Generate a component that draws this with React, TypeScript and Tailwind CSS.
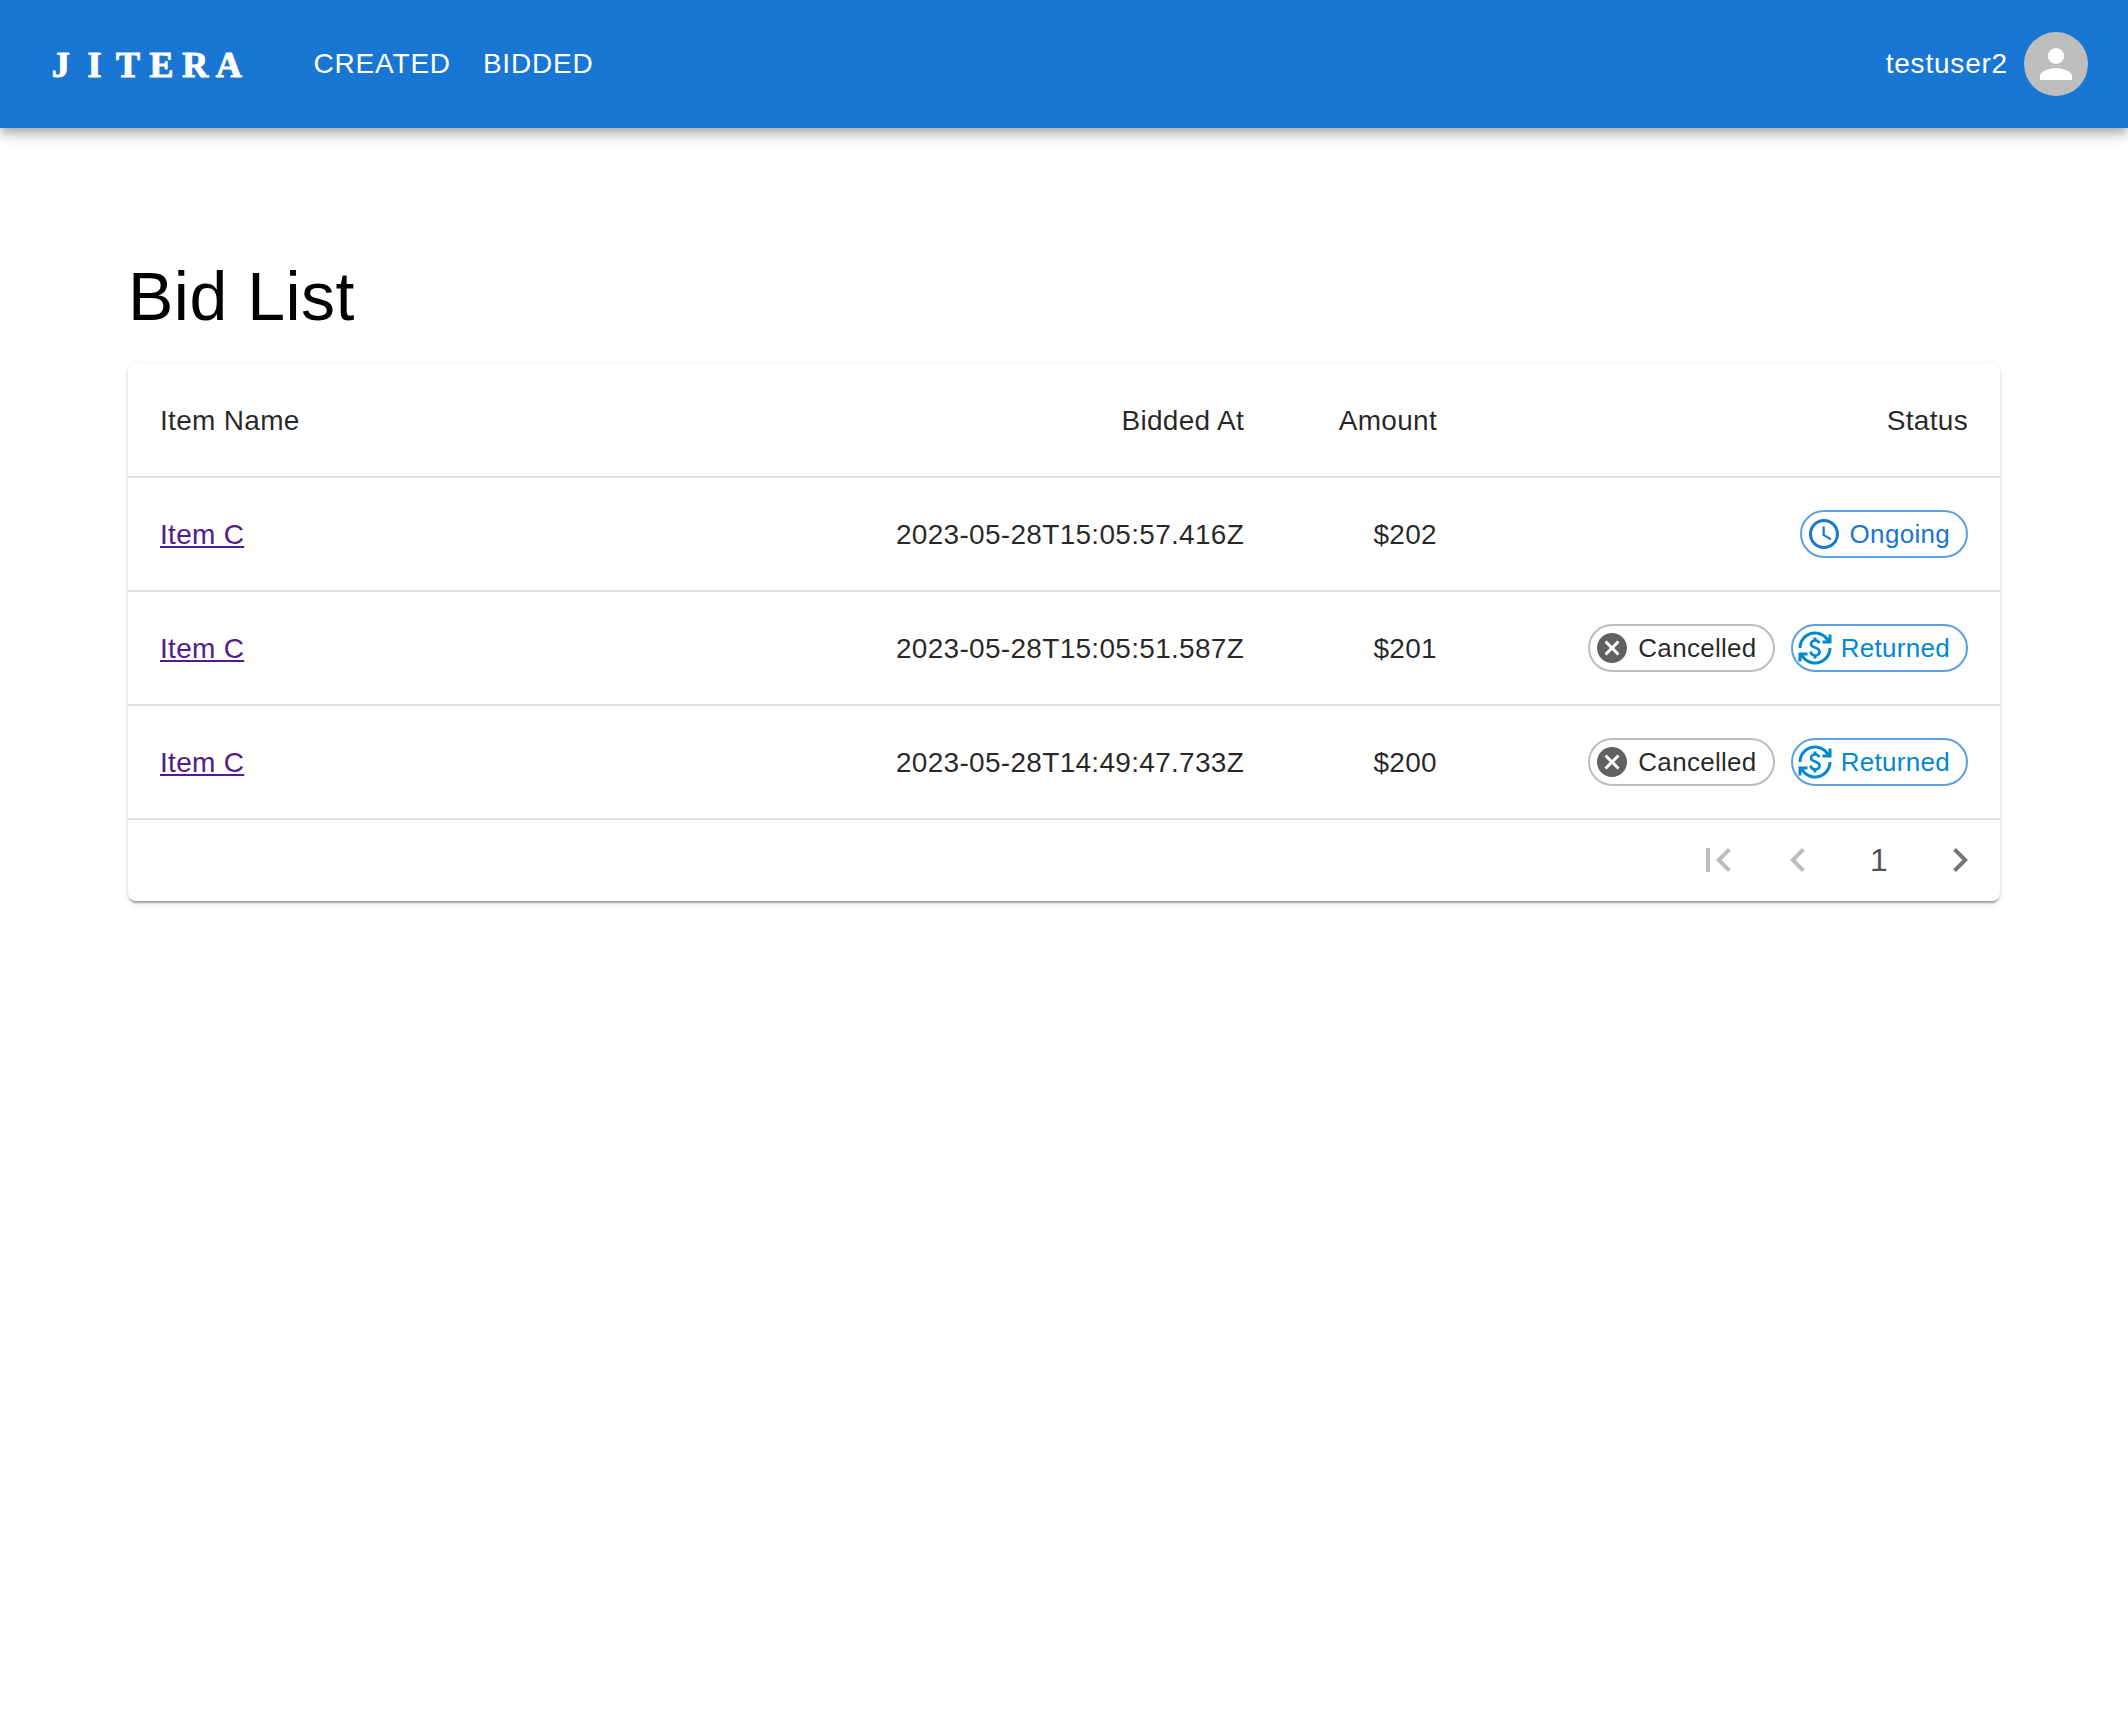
import { MdAccessTime, MdCancel, MdChevronLeft, MdChevronRight, MdCurrencyExchange, MdFirstPage, MdPerson } from 'react-icons/md';

const bids = [
  { at: '2023-05-28T15:05:57.416Z', amount: '$202', ongoing: true },
  { at: '2023-05-28T15:05:51.587Z', amount: '$201', ongoing: false },
  { at: '2023-05-28T14:49:47.733Z', amount: '$200', ongoing: false },
];

function StatusChips({ ongoing }: { ongoing: boolean }) {
  if (ongoing) {
    return (
      <div className="flex justify-end gap-4">
        <span className="flex h-12 items-center rounded-full border-2 border-[#1976d2]/70 pl-1 pr-4 text-[26px] text-[#1976d2]">
          <MdAccessTime className="mr-2 h-9 w-9" />
          Ongoing
        </span>
      </div>
    );
  }
  return (
    <div className="flex justify-end gap-4">
      <span className="flex h-12 items-center rounded-full border-2 border-[#bdbdbd] pl-1 pr-4 text-[26px] text-black/85">
        <MdCancel className="mr-2 h-9 w-9 text-[#616161]" />
        Cancelled
      </span>
      <span className="flex h-12 items-center rounded-full border-2 border-[#1976d2]/70 pl-1 pr-4 text-[26px] text-[#0288d1]">
        <MdCurrencyExchange className="mr-2 h-9 w-9" />
        Returned
      </span>
    </div>
  );
}

export default function App() {
  return (
    <div className="min-h-[1720px] bg-white font-['Liberation_Sans',sans-serif] text-black/85">
      <header className="relative flex h-32 items-center bg-[#1976d2] pl-11 pr-10 text-white shadow-[0_4px_8px_-2px_rgba(0,0,0,0.2),0_8px_10px_0_rgba(0,0,0,0.14),0_2px_20px_0_rgba(0,0,0,0.12)]">
        <span className="mr-[52px] flex pt-[2px] font-['Liberation_Serif',serif] text-[36px] font-bold [-webkit-text-stroke:1px_white]">
          {'JITERA'.split('').map((letter) => (
            <span key={letter} className="w-[33.6px] text-center">{letter}</span>
          ))}
        </span>
        <nav className="flex text-[28px] tracking-[0.8px]">
          <a className="px-4">CREATED</a>
          <a className="px-4">BIDDED</a>
        </nav>
        <div className="ml-auto flex items-center gap-4">
          <span className="text-[28px] tracking-[0.8px]">testuser2</span>
          <span className="flex h-16 w-16 items-center justify-center rounded-full bg-[#bdbdbd]">
            <MdPerson className="h-[48px] w-[48px] text-white" />
          </span>
        </div>
      </header>

      <main className="px-32 pt-[126px]">
        <h1 className="mb-[26px] text-[68px] leading-[84px] tracking-[0.5px] text-black">Bid List</h1>
        <div className="overflow-hidden rounded-lg bg-white shadow-[0_4px_2px_-2px_rgba(0,0,0,0.2),0_2px_2px_0_rgba(0,0,0,0.14),0_2px_6px_0_rgba(0,0,0,0.12)]">
          <table className="w-full table-fixed border-collapse text-[28px] tracking-[0.3px]">
            <colgroup>
              <col className="w-[736px]" />
              <col className="w-[412px]" />
              <col className="w-[193px]" />
              <col className="w-[531px]" />
            </colgroup>
            <thead>
              <tr className="h-[113px] border-b-2 border-[#e0e0e0]">
                <th className="px-8 pt-[2px] text-left font-normal">Item Name</th>
                <th className="px-8 pt-[2px] text-right font-normal">Bidded At</th>
                <th className="px-8 pt-[2px] text-right font-normal">Amount</th>
                <th className="px-8 pt-[2px] text-right font-normal">Status</th>
              </tr>
            </thead>
            <tbody>
              {bids.map((bid) => (
                <tr key={bid.at} className="h-[114px] border-b-2 border-[#e0e0e0]">
                  <td className="px-8 pt-[2px]">
                    <a className="text-[#551a8b] underline">Item C</a>
                  </td>
                  <td className="whitespace-nowrap px-8 pt-[2px] text-right">{bid.at}</td>
                  <td className="px-8 pt-[2px] text-right">{bid.amount}</td>
                  <td className="px-8">
                    <StatusChips ongoing={bid.ongoing} />
                  </td>
                </tr>
              ))}
            </tbody>
          </table>
          <div className="flex h-[81px] items-center justify-end pb-[2px] text-[32px] text-black/70">
            <span className="flex w-20 justify-center text-[#bdbdbd]"><MdFirstPage className="h-12 w-12" /></span>
            <span className="flex w-20 justify-center text-[#bdbdbd]"><MdChevronLeft className="h-12 w-12" /></span>
            <span className="w-[82px] text-center">1</span>
            <span className="flex w-20 justify-center text-[#757575]"><MdChevronRight className="h-12 w-12" /></span>
          </div>
        </div>
      </main>
    </div>
  );
}
